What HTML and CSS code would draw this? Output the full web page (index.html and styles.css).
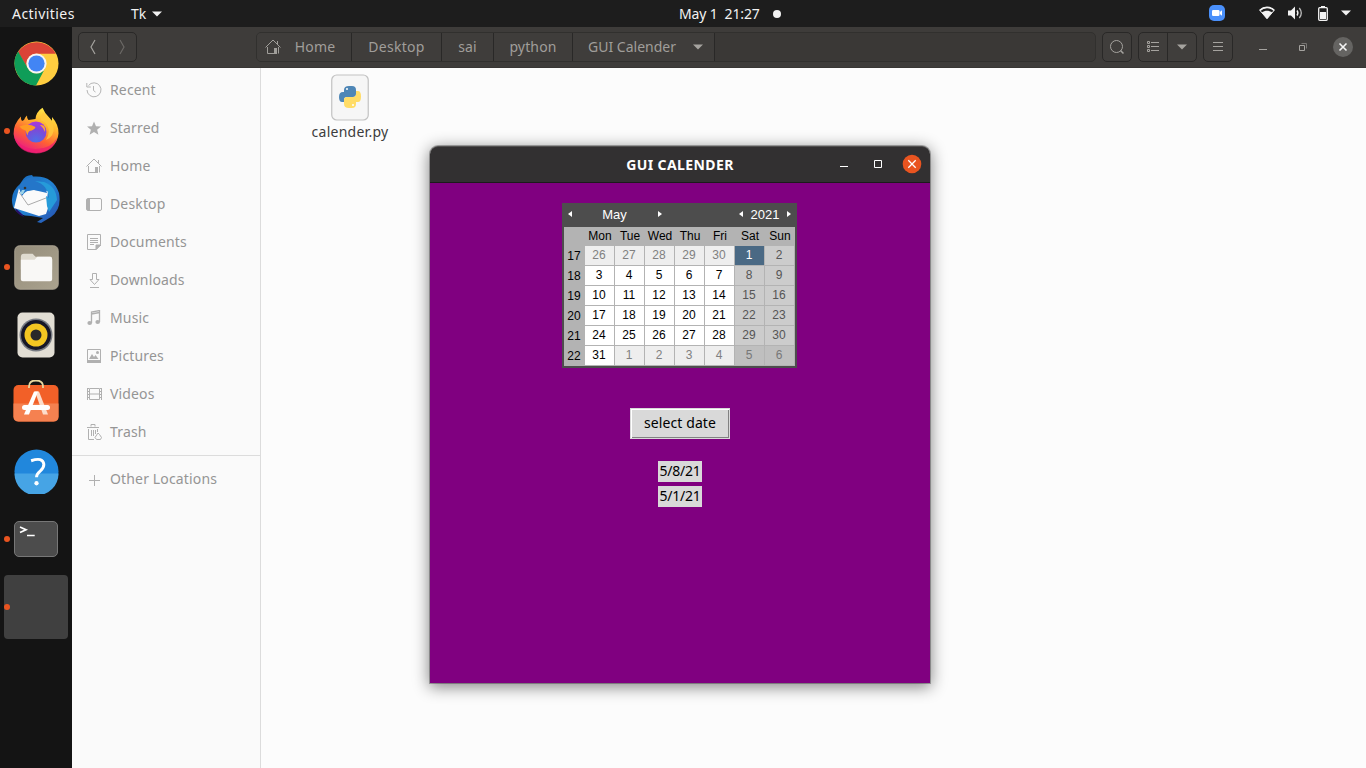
FILE: index.html
```html
<!DOCTYPE html>
<html lang="en">
<head>
<meta charset="utf-8">
<title>GUI CALENDER</title>
<link rel="stylesheet" href="styles.css">
</head>
<body>
<header class="topbar">
  <span class="activities">Activities</span>
  <span class="appmenu">Tk<svg width="10" height="6"><path d="M0 .5h10L5 5.500z" fill="#f2f2f2"/></svg></span>
  <span class="clock">May 1&nbsp; 21:27</span><i class="notify"></i>
  <span class="tray">
    <svg width="16" height="16" class="zoomicon"><rect width="16" height="16" rx="5" fill="#4a90fb"/><rect x="3" y="5" width="7.500" height="6" rx="1.200" fill="#fff"/><path d="M10.800 7l2.200-1.700v5.400L10.800 9z" fill="#fff"/></svg>
    <svg width="16" height="14" class="wifi"><path d="M.8 4.300C5 .5 11 .5 15.200 4.300L8 12.700z" fill="none" stroke="#f2f2f2"/><path d="M2.800 6.500c3-2.500 7.400-2.500 10.400 0L8 13z" fill="#f2f2f2"/><path d="M.8 4.300C5 .5 11 .5 15.200 4.300" fill="none" stroke="#f2f2f2" stroke-width="1.800"/></svg>
    <svg width="16" height="14" class="sound"><path d="M0 4.500h3l4-4v13l-4-4H0z" fill="#f2f2f2"/><path d="M9 4.500q1.800 2.500 0 5" fill="none" stroke="#f2f2f2" stroke-width="1.400"/><path d="M11.300 2q4 5 0 10" fill="none" stroke="#bbb" stroke-width="1.300"/></svg>
    <svg width="10" height="15" class="battery"><path d="M3 0h4v2H3z" fill="#f2f2f2"/><rect x=".7" y="1.700" width="8.600" height="12.600" rx="1" fill="none" stroke="#f2f2f2" stroke-width="1.300"/><path d="M2 6h6v7H2z" fill="#f2f2f2"/></svg>
    <svg width="10" height="6"><path d="M0 .5h10L5 5.500z" fill="#f2f2f2"/></svg>
  </span>
</header>
<div class="desktop">
<nav class="dock">
  <div class="launcher"><svg width="45" height="45" viewBox="0 0 46 46"><circle cx="23" cy="23" r="22.500" fill="#ffcd40"/><path d="M4 11.500A22.500 22.500 0 0 1 42.700 13H23a10 10 0 0 0-8.700 15z" fill="#db4437"/><path d="M4.200 10.800A22.500 22.500 0 0 0 22.500 45.500L31.700 28a10 10 0 0 1-17.400 0z" fill="#0f9d58"/><circle cx="23" cy="23" r="10.300" fill="#f5f5f5"/><circle cx="23" cy="23" r="8.300" fill="#4285f4"/></svg></div>
  <div class="launcher running"><svg width="46" height="48" viewBox="0 0 46 48"><defs><linearGradient id="ff" x1=".8" y1="0" x2=".3" y2="1"><stop offset="0" stop-color="#fff44f"/><stop offset=".35" stop-color="#ffb52e"/><stop offset=".65" stop-color="#ff6133"/><stop offset="1" stop-color="#e9178a"/></linearGradient><radialGradient id="fp" cx=".5" cy=".9" r="1"><stop offset="0" stop-color="#4f6fe8"/><stop offset=".5" stop-color="#7b4bd8"/><stop offset="1" stop-color="#b833e1"/></radialGradient></defs><path d="M8 9.500Q7.500 12 9 14l2-1q1-3 3-4.500-.3 3 1.500 4.500l7-1Q23 5 29.500.8q2 5 6 9l3.500 4V10q7 8 6.500 16.500A22.500 20.500 0 0 1 .6 27Q.3 17 8 9.500z" fill="url(#ff)"/><path d="M1 29Q8 42 23 42t21-11Q40 46 23 46.500 5 46 1 29z" fill="#ee1b70" opacity=".7"/><circle cx="23" cy="25" r="10.500" fill="url(#fp)"/><path d="M6.500 19.500Q15 16 22.500 20q-1 3-6 4-2 1.500-2 4.500Q13 25 12.500 23.500 9 23 6.500 19.500z" fill="#ff9b24"/><path d="M24 13q7 0 10 5 4 7-1 15 9-4 7.500-14Q38 12 30 5q-3 5-2 8z" fill="#ffc83d" opacity=".85"/><path d="M27 18q6-1 5 7l-2-4z" fill="#ffa52e"/></svg></div>
  <div class="launcher"><svg width="50" height="50" viewBox="0 0 50 50"><defs><linearGradient id="tb" x1="0" y1="0" x2="1" y2="1"><stop offset="0" stop-color="#1766ba"/><stop offset=".5" stop-color="#2383d2"/><stop offset="1" stop-color="#284eaf"/></linearGradient></defs><path d="M11 7Q14 1 21 1l1 1.500Q42 1 48 19q3 16-8 24l-10 6-4-1 6-4-12-2Q7 42 2 33-2 19 9 10z" fill="url(#tb)"/><path d="M4 34Q13 41 13 43 5 40 4 34z" fill="#281069"/><path d="M8 14L6 22 3 34l25 8 7-2 2-6-1-9 1-8-14-1-13 2z" fill="#fafafa"/><path d="M8 18l9 13 18-7" fill="none" stroke="#aaa"/><path d="M8 14q2-9 13-11 10 1 13 10l2 6-13-3q-8-1-12 6z" fill="#2476c9"/><path d="M9 20l2-4 3 0-2 4z" fill="#9bd3e8"/><circle cx="14" cy="14" r="1.300" fill="#333"/><path d="M24 7q13 4 14 17l-3-2 1 10 2 6 8-12Q45 12 33 8z" fill="#269bd9"/></svg></div>
  <div class="launcher running"><svg width="45" height="45" viewBox="0 0 46 46"><defs><linearGradient id="fo" x1="0" y1="0" x2="1" y2="1"><stop offset="0" stop-color="#958d7b"/><stop offset="1" stop-color="#aaa28e"/></linearGradient></defs><rect x=".8" y=".8" width="44.400" height="44.400" rx="5" fill="url(#fo)" stroke="#aba392"/><path d="M7 12q0-3 3-3h9l3 3h15q2 0 2 3v10H7z" fill="#dfdbd0"/><path d="M7 15h14l3-3h13q2 0 2 3v20q0 2-2 2H9q-2 0-2-2z" fill="#f9f8f6"/></svg></div>
  <div class="launcher"><svg width="38" height="46" viewBox="0 0 38 46"><rect x=".5" y=".5" width="37" height="45" rx="5" fill="#e2ded4"/><circle cx="19" cy="23" r="16.500" fill="#777b82"/><circle cx="19" cy="23" r="15" fill="#171827"/><circle cx="19" cy="23" r="11.500" fill="#f3c622"/><circle cx="19" cy="23" r="5.500" fill="#292929"/></svg></div>
  <div class="launcher"><svg width="46" height="46" viewBox="0 2.500 46 46"><rect x=".5" y="7.500" width="45" height="36.500" rx="5" fill="#f26028"/><path d="M.5 26h45v13q0 5-5 5h-35q-5 0-5-5z" fill="#f58150"/><path d="M16 10.500V9q0-6 7-6t7 6v1.500" fill="none" stroke="#e7d79f" stroke-width="1.800"/><path d="M22 14h4l9 23h-5z" fill="#fcddcb"/><path d="M21 14h4l-9 23h-5z" fill="#fff"/><rect x="9" y="27.500" width="28" height="5" rx="2.500" fill="#fff"/></svg></div>
  <div class="launcher"><svg width="45" height="45" viewBox="0 0 46 46"><circle cx="23" cy="23" r="22.500" fill="#2187dc"/><path d="M.5 25h45A22.500 22.500 0 0 1 .5 25z" fill="#46a4e5"/><path d="M17.500 12Q29.500 8 30.500 15.500C31 23 23 22 23 29" fill="none" stroke="#fff" stroke-width="3"/><circle cx="23" cy="35" r="2.200" fill="#fff"/></svg></div>
  <div class="launcher running"><svg width="46" height="38" viewBox="0 0 46 38"><rect x="1.500" y="1.500" width="43" height="35" rx="4.500" fill="#4c4c4c" stroke="#777"/><path d="M7 7l6 2.700-6 2.800M14 15.500H21.700" fill="none" stroke="#fff" stroke-width="1.700"/></svg></div>
  <div class="launcher running active"></div>
  <div class="launcher showapps"><i></i><i></i><i></i><i></i><i></i><i></i><i></i><i></i><i></i></div>
</nav>
<section class="files">
  <div class="toolbar">
    <div class="btns"><span><svg width="10" height="16"><path d="M7 1L3 8l4 7" fill="none" stroke="#a5a39f" stroke-width="1.200"/></svg></span><span><svg width="10" height="16"><path d="M3 1l4 7-4 7" fill="none" stroke="#6b6966" stroke-width="1.200"/></svg></span></div>
    <div class="pathbar">
      <span class="seg home"><svg width="16" height="16" fill="none" stroke="#a09e9a"><path d="M.5 8.500L8 1l7.500 7.500M2.500 8v6.500h7M13.500 8v6.500M12.500 2v3"/><path d="M9 9h3v6H9z" fill="#a09e9a" stroke="none"/></svg>Home</span><span class="seg desk">Desktop</span><span class="seg sai">sai</span><span class="seg python">python</span><span class="seg gui">GUI Calender<svg width="10" height="6"><path d="M0 .5h10L5 5.500z" fill="#a5a39f"/></svg></span>
    </div>
    <div class="btns one"><span><svg width="16" height="16" fill="none" stroke="#a5a39f"><circle cx="7.500" cy="7.500" r="6"/><path d="M11.500 11.500l3 3" stroke-width="1.500"/></svg></span></div>
    <div class="btns"><span><svg width="14" height="14" fill="none" stroke="#a5a39f"><path d="M1.500 1.500h2v2h-2zM1.500 5.500h2v2h-2zM1.500 9.500h2v2h-2zM5 2.500h8M5 6.500h8M5 10.500h8"/></svg></span><span><svg width="10" height="6"><path d="M0 .5h10L5 5.500z" fill="#a5a39f"/></svg></span></div>
    <div class="btns one"><span><svg width="12" height="12"><path d="M1 1.500h10M1 5.500h10M1 9.500h10" stroke="#a5a39f"/></svg></span></div>
    <div class="winctl">
      <svg width="8" height="8"><path d="M0 6.500h8" stroke="#a5a39f"/></svg>
      <svg width="8" height="8" fill="none"><path d="M2.500.5h5v5" stroke="#777572"/><path d="M.5 2.500h5v5h-5z" stroke="#a5a39f"/></svg>
      <svg width="20" height="20"><circle cx="10" cy="10" r="10" fill="#656462"/><path d="M6.500 6.500l7 7M13.500 6.500l-7 7" stroke="#f5f5f5" stroke-width="1.600"/></svg>
    </div>
  </div>
  <div class="panes">
    <aside class="sidebar">
      <div class="place"><svg width="16" height="16" fill="none" stroke="#b5b5b5"><path d="M2.500 3.500A7 7 0 1 1 1 8M.8 1v4h4M7.500 4v4.500l2 1.500"/></svg>Recent</div>
      <div class="place"><svg width="16" height="16"><path d="M8 1.500l2 4.700 5 .4-3.900 3.200 1.300 4.900L8 12l-4.400 2.700 1.300-4.900L1 6.600l5-.4z" fill="#b0b0b0"/></svg>Starred</div>
      <div class="place"><svg width="16" height="16" fill="none" stroke="#b0b0b0"><path d="M.5 8.500L8 1l7.500 7.500M2.500 8v6.500h7M13.500 8v6.500M12.500 2v3"/><path d="M9 9h3v6H9z" fill="#b0b0b0" stroke="none"/></svg>Home</div>
      <div class="place"><svg width="16" height="16"><rect x=".5" y="2.500" width="15" height="12" rx="1.500" fill="none" stroke="#b0b0b0"/><path d="M1 3h3v11H1z" fill="#b0b0b0"/></svg>Desktop</div>
      <div class="place"><svg width="16" height="16" fill="none" stroke="#b0b0b0"><path d="M1.500.5h13v10l-4 5h-9zM4 4.500h8M4 6.500h8M4 8.500h8M4 10.500h4"/><path d="M10 15v-4h5z" fill="#b0b0b0"/></svg>Documents</div>
      <div class="place"><svg width="16" height="16" fill="none" stroke="#b0b0b0"><path d="M6.500 1.500h4v6H13l-4.500 5L4 7.500h2.500zM4 15.500h9"/></svg>Downloads</div>
      <div class="place"><svg width="16" height="16" fill="none" stroke="#b0b0b0" stroke-width="1.300"><path d="M5.500 13V2l8-1.500V12M5.500 4l8-1.500"/><g fill="#b0b0b0" stroke="none"><ellipse cx="3.700" cy="13" rx="2.300" ry="2"/><ellipse cx="11.700" cy="12" rx="2.300" ry="2"/></g></svg>Music</div>
      <div class="place"><svg width="16" height="16"><path d="M1.500 1.500h13v12h-13z" fill="none" stroke="#b0b0b0"/><path d="M1 12h14v3H1zM3 11l3-5 2 3 1.500-2 3 4z" fill="#b0b0b0"/><circle cx="11.500" cy="4.500" r="1.500" fill="#b0b0b0"/></svg>Pictures</div>
      <div class="place"><svg width="16" height="16" fill="none" stroke="#b0b0b0"><path d="M3.500 2.500h10v11h-10zM3 8h10M1.500 2v12M15.500 2v12"/><path d="M2.500 2v12M14.500 2v12" stroke-dasharray="1 2"/></svg>Videos</div>
      <div class="place"><svg width="16" height="16" fill="none" stroke="#b0b0b0"><path d="M1 3.500h12M5 2.500v-2h4v2M2.500 5v10.500H8M11.500 5v3M5.500 6v6M7.500 6v6M9.500 6v4"/><path d="M12 9l-3 4.500 1.500 2h4l1-2-2-3z"/></svg>Trash</div>
      <div class="place other"><svg width="16" height="16"><path d="M3 8.500h11M8.500 3v11" stroke="#b0b0b0"/></svg>Other Locations</div>
    </aside>
    <main class="content">
      <div class="file"><svg width="38" height="47" viewBox="0 0 38 47"><rect x=".75" y="1" width="36.500" height="45" rx="5" fill="#f6f6f6" stroke="#c2c2c2" stroke-width="1.200"/><path d="M13 18v-2q0-4 5-4h3q4 0 4 4v4q0 3-3 3h-6q-3 0-3 3v2h-2q-3 0-3-5t4-5h5z" fill="#4e86b6"/><path d="M25 17h2q3 0 3 5.500t-3 5.500h-2v2q0 4-4 4h-3q-5 0-5-4v-4q0-3 3-3h6q3 0 3-3z" fill="#ffdc66"/><circle cx="16" cy="15" r="1" fill="#fff"/><circle cx="22" cy="31" r="1" fill="#fff"/></svg><span>calender.py</span></div>
    </main>
  </div>
</section>
</div>
<div class="tkwin">
  <div class="titlebar"><span class="title">GUI CALENDER</span>
    <div class="controls"><svg width="8" height="8"><path d="M0 6.500h8" stroke="#fff"/></svg><svg width="8" height="8"><path d="M.5.5h7v7h-7z" fill="none" stroke="#fff"/></svg><svg width="20" height="20"><circle cx="10" cy="10" r="9.300" fill="#e95420"/><path d="M6.300 6.300l7.400 7.400M13.700 6.300l-7.400 7.400" stroke="#fff" stroke-width="1.300"/></svg></div>
  </div>
  <div class="tkbody">
    <div class="calendar">
      <div class="calhead"><svg width="4" height="6"><path d="M4 0v6L0 3z" fill="#fff"/></svg><span class="month">May</span><svg width="4" height="6"><path d="M0 0v6l4-3z" fill="#fff"/></svg><span class="space"></span><svg width="4" height="6"><path d="M4 0v6L0 3z" fill="#fff"/></svg><span class="year">2021</span><svg width="4" height="6"><path d="M0 0v6l4-3z" fill="#fff"/></svg></div>
      <div class="grid">
        <b></b><b class="d">Mon</b><b class="d">Tue</b><b class="d">Wed</b><b class="d">Thu</b><b class="d">Fri</b><b class="d">Sat</b><b class="d">Sun</b>
        <b>17</b><i class="o">26</i><i class="o">27</i><i class="o">28</i><i class="o">29</i><i class="o">30</i><i class="sel">1</i><i class="w">2</i>
        <b>18</b><i>3</i><i>4</i><i>5</i><i>6</i><i>7</i><i class="w">8</i><i class="w">9</i>
        <b>19</b><i>10</i><i>11</i><i>12</i><i>13</i><i>14</i><i class="w">15</i><i class="w">16</i>
        <b>20</b><i>17</i><i>18</i><i>19</i><i>20</i><i>21</i><i class="w">22</i><i class="w">23</i>
        <b>21</b><i>24</i><i>25</i><i>26</i><i>27</i><i>28</i><i class="w">29</i><i class="w">30</i>
        <b>22</b><i>31</i><i class="o">1</i><i class="o">2</i><i class="o">3</i><i class="o">4</i><i class="ow">5</i><i class="ow">6</i>
      </div>
    </div>
    <button class="select">select date</button>
    <div class="result">5/8/21</div>
    <div class="result">5/1/21</div>
  </div>
</div>
</body>
</html>
```
FILE: styles.css
```css
* { box-sizing: border-box; }
body { margin: 0; width: 1366px; height: 768px; overflow: hidden; font: 14px "Noto Sans", sans-serif; position: relative; }
svg { display: block; flex: none; }
i { font-style: normal; }
.topbar { height: 27px; background: #1d1d1d; color: #f2f2f2; display: flex; align-items: center; padding-left: 12px; }
.topbar > span { white-space: nowrap; }
.activities { width: 119px; letter-spacing: .45px; }
.appmenu { width: 548px; display: flex; align-items: center; gap: 6px; }
.clock { width: 81px; letter-spacing: -.15px; padding-bottom: 1px; }
.notify { width: 8px; height: 8px; border-radius: 50%; background: #f2f2f2; margin-left: 13px; }
.tray { display: flex; align-items: center; margin-left: auto; padding: 0 15px 1px 0; }
.zoomicon { margin-right: 34px; }
.wifi { margin-right: 13px; }
.sound { margin-right: 14px; }
.battery { margin-right: 13px; }
.desktop { display: flex; height: 741px; }
.dock { width: 72px; background: #141414; padding: 4px 4px 2px; display: flex; flex-direction: column; gap: 4px; }
.launcher { width: 64px; height: 64px; border-radius: 4px; display: flex; align-items: center; justify-content: center; position: relative; }
.running::before { content: ""; position: absolute; left: 0; top: 29px; width: 6px; height: 6px; border-radius: 50%; background: #e95420; }
.active { background: #404040; }
.showapps { margin-top: auto; display: grid; grid-template-columns: repeat(3, 6px); grid-auto-rows: 6px; gap: 6px; align-content: center; }
.showapps i { background: #f2f2f2; border-radius: 1.500px; }
.files { width: 1294px; display: flex; flex-direction: column; }
.toolbar { height: 41px; background: #3e3c3a; display: flex; align-items: flex-start; gap: 6px; padding: 5px 0 0 6px; border-bottom: 1px solid #383634; }
.btns { display: flex; border: 1px solid #292827; border-radius: 5px; height: 30px; width: 59px; background: #403e3c; }
.btns.one { width: 30px; }
.btns span { flex: 1; display: flex; align-items: center; justify-content: center; }
.btns span + span { border-left: 1px solid #292827; }
.pathbar { width: 840px; height: 30px; margin-left: 113px; border: 1px solid #31302e; border-radius: 5px; background: #3a3836; display: flex; color: #a09e9a; letter-spacing: .15px; }
.seg { border-right: 1px solid #292827; background: #3f3d3b; display: flex; align-items: center; justify-content: center; white-space: nowrap; padding-bottom: 1px; }
.home { width: 95px; gap: 14px; padding-right: 8px; border-radius: 4px 0 0 4px; }
.desk { width: 90px; letter-spacing: .3px; }
.sai { width: 52px; }
.python { width: 79px; }
.gui { width: 142px; gap: 17px; padding-left: 4px; letter-spacing: 0; }
.winctl { display: flex; align-items: center; height: 30px; margin-left: 20px; }
.winctl svg:nth-child(2) { margin: 0 26px 0 32px; }
.panes { display: flex; flex: 1; }
.sidebar { width: 189px; background: #fafafa; border-right: 1px solid #dcdcdc; color: #959595; padding-top: 3px; letter-spacing: .15px; }
.place { height: 38px; display: flex; align-items: center; gap: 8px; padding: 0 0 2px 14px; }
.place svg { margin-top: 2px; }
.other { margin-top: 4px; border-top: 1px solid #dcdcdc; height: 48px; }
.content { flex: 1; background: #fcfcfc; padding: 6px 0 0 50px; }
.file { width: 78px; display: flex; flex-direction: column; align-items: center; color: #3d3d3d; line-height: 21px; white-space: nowrap; letter-spacing: .25px; }
.tkwin { position: absolute; left: 430px; top: 146px; width: 500px; height: 537px; border-radius: 8px 8px 0 0; box-shadow: 0 0 0 1px rgba(0,0,0,.28), 0 3px 16px 1px rgba(0,0,0,.48); }
.titlebar { height: 37px; background: #323031; border-top: 1px solid #514f4f; border-bottom: 1px solid #1c1b1c; border-radius: 8px 8px 0 0; color: #fff; display: grid; grid-template-columns: 1fr auto 1fr; align-items: center; font-weight: bold; }
.title { grid-column: 2; letter-spacing: .4px; }
.controls { display: flex; align-items: center; justify-content: flex-end; padding: 0 8px 2px 0; gap: 26px; }
.controls svg:last-child { margin-left: -6px; }
.tkbody { height: 500px; background: #800080; display: flex; flex-direction: column; align-items: center; padding-top: 20px; }
.calendar { width: 235px; height: 165px; background: #4d4d4d; padding: 0 2px 2px; font-family: "Liberation Sans", sans-serif; margin-right: 1px; }
.calhead { height: 24px; display: flex; align-items: center; color: #fff; font-size: 13px; padding: 0 4px 2px; }
.month { width: 86px; text-align: center; padding-right: 1px; }
.space { width: 77px; }
.year { width: 44px; text-align: center; }
.grid { display: grid; grid-template-columns: 21px repeat(7, 30px); grid-template-rows: 19px repeat(6, 20px); background: #b3b3b3; font-size: 12px; }
.grid b { font-weight: normal; text-align: center; line-height: 20px; padding-right: 1px; }
.grid .d { line-height: 18px; padding-right: 0; }
.grid i { background: #fff; border: solid #b3b3b3; border-width: 0 1px 1px 0; text-align: center; line-height: 19px; padding-right: 1px; }
.grid .o { background: #eee; color: #808080; }
.grid .w { background: #ccc; color: #555; }
.grid .ow { background: #bfbfbf; color: #777; }
.grid .sel { background: #4a6984; color: #fff; }
.select { width: 100px; height: 31px; margin: 40px 0 22px; background: #d9d9d9; border: 1px solid #d9d9d9; box-shadow: inset 1px 1px #fff, inset -1px -1px #828282; font: 14px "Noto Sans", sans-serif; letter-spacing: .1px; color: #000; padding: 0 0 2px; }
.result { width: 44px; height: 21px; line-height: 19px; background: #d9d9d9; text-align: center; margin-bottom: 4px; letter-spacing: -.25px; }
```
